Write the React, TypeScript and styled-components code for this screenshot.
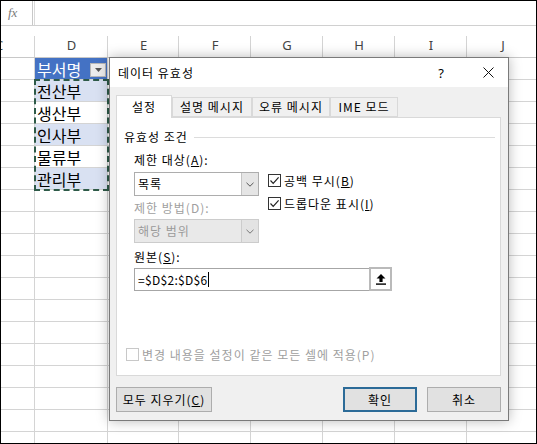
import React from 'react';
import styled, { createGlobalStyle } from 'styled-components';

const Global = createGlobalStyle`
  html, body { margin: 0; padding: 0; background: #fff; }
  body { font-family: "Noto Sans CJK KR", "Noto Sans", sans-serif; }
  * { box-sizing: border-box; }
`;

const KR = `"Noto Sans CJK KR", "Noto Sans", sans-serif`;

const Frame = styled.div`
  position: relative;
  width: 537px;
  height: 444px;
  border: 1px solid #000;
  overflow: hidden;
  background: #fff;
`;

const FormulaBar = styled.div`
  display: flex;
  height: 25px;
  border-bottom: 1px solid #d0d0d0;
`;

const FxBox = styled.div`
  width: 32px;
  display: flex;
  align-items: center;
  padding-left: 7px;
  font-family: "Liberation Serif", serif;
  font-style: italic;
  font-size: 13px;
  color: #7a7a7a;
  border-right: 1px solid #c8c8c8;
`;

const FormulaInput = styled.div`
  flex: 1;
  margin-left: 1px;
  border-left: 1px solid #dadada;
`;

const HeaderRow = styled.div`
  display: flex;
  height: 32px;
  margin-left: -38px;
  border-bottom: 1px solid #c8c8c8;
`;

const HeaderCell = styled.div<{ $w: number }>`
  position: relative;
  flex: 0 0 ${p => p.$w}px;
  display: flex;
  align-items: center;
  justify-content: center;
  padding-top: 6px;
  font-family: "Noto Sans", sans-serif;
  font-size: 13px;
  color: #444;
  &::after {
    content: '';
    position: absolute;
    right: 0;
    top: 10px;
    bottom: 0;
    width: 1px;
    background: #d4d4d4;
  }
`;

const Sheet = styled.div`
  position: relative;
`;

const Row = styled.div`
  display: flex;
  height: 22px;
  margin-left: -38px;
`;

const Cell = styled.div<{ $w: number; $bg?: string; $head?: boolean }>`
  flex: 0 0 ${p => p.$w}px;
  display: flex;
  align-items: center;
  padding-left: 2px;
  border-right: 1px solid #d4d4d4;
  border-bottom: 1px solid #d4d4d4;
  background: ${p => p.$bg || '#fff'};
  font-family: ${KR};
  font-size: 16px;
  line-height: 1;
  color: ${p => (p.$head ? '#fff' : '#000')};
`;

const FilterButton = styled.div`
  margin-left: auto;
  margin-right: 1px;
  margin-top: 3px;
  width: 16px;
  height: 14px;
  background: #ececec;
  border: 1px solid #b8b8b8;
  display: flex;
  align-items: center;
  justify-content: center;
`;

const Ants = styled.div`
  position: absolute;
  left: 33px;
  top: 21px;
  width: 75px;
  height: 112px;
  border: 2px dashed #2e5a48;
  pointer-events: none;
`;

const Dialog = styled.div`
  position: absolute;
  left: 108px;
  top: 56px;
  width: 400px;
  height: 364px;
  border: 1px solid #7a7a7a;
  background: #f0f0f0;
  box-shadow: 0 0 12px rgba(0, 0, 0, 0.28);
  display: flex;
  flex-direction: column;
  font-family: ${KR};
  font-size: 12px;
  letter-spacing: 1px;
  color: #000;
`;

const TitleBar = styled.div`
  height: 29px;
  background: #fff;
  display: flex;
  align-items: center;
  padding-left: 8px;
`;

const TitleText = styled.div`
  flex: 1;
  line-height: 16px;
`;

const TitleButton = styled.div<{ $w: number }>`
  width: ${p => p.$w}px;
  height: 29px;
  display: flex;
  align-items: center;
  justify-content: center;
  font-family: "Noto Sans", sans-serif;
  font-size: 13px;
  letter-spacing: 0;
`;

const Body = styled.div`
  flex: 1;
  display: flex;
  flex-direction: column;
  padding: 8px 7px 0 6px;
`;

const TabRow = styled.div`
  display: flex;
  align-items: flex-end;
  height: 22px;
`;

const Tab = styled.div<{ $w: number; $active?: boolean }>`
  position: relative;
  z-index: ${p => (p.$active ? 2 : 1)};
  width: ${p => p.$w}px;
  height: ${p => (p.$active ? 23 : 20)}px;
  margin-bottom: ${p => (p.$active ? -1 : 0)}px;
  background: ${p => (p.$active ? '#fff' : '#f0f0f0')};
  border: 1px solid #d9d9d9;
  border-bottom: ${p => (p.$active ? 'none' : '1px solid #d9d9d9')};
  display: flex;
  align-items: center;
  justify-content: center;
  padding-bottom: ${p => (p.$active ? 1 : 0)}px;
  line-height: 16px;
  white-space: nowrap;
`;

const Panel = styled.div`
  height: 259px;
  background: #fff;
  border: 1px solid #d9d9d9;
  display: flex;
  flex-direction: column;
  line-height: 16px;
`;

const GroupHeader = styled.div`
  display: flex;
  align-items: center;
  margin: 11px 5px 0 7px;
`;

const GroupLine = styled.div`
  flex: 1;
  height: 1px;
  margin-left: 6px;
  background: #dcdcdc;
`;

const FieldArea = styled.div`
  display: flex;
  padding-left: 17px;
`;

const LeftCol = styled.div`
  width: 258px;
  display: flex;
  flex-direction: column;
`;

const Label = styled.div<{ $top: number; $disabled?: boolean }>`
  margin-top: ${p => p.$top}px;
  color: ${p => (p.$disabled ? '#a0a0a0' : '#000')};
  height: 16px;
`;

const Combo = styled.div<{ $disabled?: boolean }>`
  margin-top: ${p => (p.$disabled ? 3 : 4)}px;
  width: 125px;
  height: 24px;
  display: flex;
  border: 1px solid ${p => (p.$disabled ? '#cccccc' : '#adadad')};
  background: ${p => (p.$disabled ? '#e9e9e9' : '#fff')};
  color: ${p => (p.$disabled ? '#9a9a9a' : '#000')};
`;

const ComboText = styled.div`
  flex: 1;
  display: flex;
  align-items: center;
  padding-left: 3px;
`;

const ComboArrow = styled.div<{ $disabled?: boolean }>`
  width: 17px;
  display: flex;
  align-items: center;
  justify-content: center;
  background: ${p => (p.$disabled ? '#e3e3e3' : '#e5e5e5')};
  border-left: 1px solid ${p => (p.$disabled ? '#cccccc' : '#c4c4c4')};
`;

const SourceInput = styled.div`
  margin-top: 3px;
  width: 258px;
  height: 23px;
  display: flex;
  border: 1px solid #a6a6a6;
  background: #fff;
`;

const SourceText = styled.div`
  flex: 1;
  display: flex;
  align-items: center;
  padding-left: 3px;
  letter-spacing: 0.3px;
`;

const Caret = styled.span`
  display: inline-block;
  width: 1px;
  height: 15px;
  margin-left: 1px;
  background: #000;
`;

const RefButton = styled.div`
  width: 23px;
  margin: -2px -1px -1px 0;
  border: 2px solid #bababa;
  background: #fff;
  display: flex;
  align-items: center;
  justify-content: center;
`;

const CheckCol = styled.div`
  margin-left: -124px;
  margin-top: 29px;
  display: flex;
  flex-direction: column;
  gap: 10px;
`;

const CheckRow = styled.div<{ $disabled?: boolean }>`
  display: flex;
  align-items: center;
  height: 13px;
  white-space: nowrap;
  color: ${p => (p.$disabled ? '#a0a0a0' : '#000')};
`;

const Box = styled.span<{ $disabled?: boolean }>`
  width: 13px;
  height: 13px;
  flex: 0 0 13px;
  border: 1px solid ${p => (p.$disabled ? '#c8c8c8' : '#333')};
  background: #fff;
  margin-right: 3px;
  display: flex;
  align-items: center;
  justify-content: center;
`;

const BottomCheck = styled(CheckRow)`
  margin: auto 0 14px 9px;
`;

const Footer = styled.div`
  display: flex;
  margin-top: 11px;
`;

const Button = styled.div<{ $w: number; $default?: boolean; $push?: boolean }>`
  width: ${p => p.$w}px;
  height: 25px;
  margin-left: ${p => (p.$push ? 'auto' : '0')};
  display: flex;
  align-items: center;
  justify-content: center;
  background: #e1e1e1;
  border: ${p => (p.$default ? '2px solid #2c6b98' : '1px solid #adadad')};
  line-height: 16px;
  white-space: nowrap;
`;

const Gap = styled.div`
  width: 10px;
`;

const Check = () => (
  <svg width="11" height="11" viewBox="0 0 11 11">
    <path d="M1.5 5.5 L4.2 8.3 L9.6 2.4" fill="none" stroke="#222" strokeWidth="1.2" />
  </svg>
);

const Chevron = ({ color = '#555' }: { color?: string }) => (
  <svg width="8" height="5" viewBox="0 0 8 5">
    <path d="M0.5 0.8 L4 4.2 L7.5 0.8" fill="none" stroke={color} strokeWidth="1" />
  </svg>
);

const UpArrow = () => (
  <svg width="10" height="11" viewBox="0 0 10 11">
    <path d="M5 0 L9.5 4.6 L6.6 4.6 L6.6 8 L3.4 8 L3.4 4.6 L0.5 4.6 Z" fill="#000" />
    <rect x="0" y="9.4" width="10" height="1.4" fill="#000" />
  </svg>
);

const CloseX = () => (
  <svg width="11" height="11" viewBox="0 0 11 11">
    <path d="M0.5 0.5 L10.5 10.5 M10.5 0.5 L0.5 10.5" stroke="#111" strokeWidth="1" />
  </svg>
);

const FilterArrow = () => (
  <svg width="7" height="4" viewBox="0 0 7 4">
    <path d="M0 0 L7 0 L3.5 4 Z" fill="#555" />
  </svg>
);

const cols = [
  { key: 'C', w: 72 },
  { key: 'D', w: 73 },
  { key: 'E', w: 71 },
  { key: 'F', w: 72 },
  { key: 'G', w: 72 },
  { key: 'H', w: 72 },
  { key: 'I', w: 72 },
  { key: 'J', w: 72 },
];

const data = ['전산부', '생산부', '인사부', '물류부', '관리부'];
const ROWS = 18;

export default function App() {
  return (
    <>
      <Global />
      <Frame>
        <FormulaBar>
          <FxBox>fx</FxBox>
          <FormulaInput />
        </FormulaBar>
        <HeaderRow>
          {cols.map(c => (
            <HeaderCell key={c.key} $w={c.w}>{c.key}</HeaderCell>
          ))}
        </HeaderRow>
        <Sheet>
          {Array.from({ length: ROWS }).map((_, r) => (
            <Row key={r}>
              {cols.map(c => {
                if (c.key === 'D' && r === 0) {
                  return (
                    <Cell key={c.key} $w={c.w} $bg="#4472c4" $head>
                      부서명
                      <FilterButton><FilterArrow /></FilterButton>
                    </Cell>
                  );
                }
                if (c.key === 'D' && r >= 1 && r <= 5) {
                  return (
                    <Cell key={c.key} $w={c.w} $bg={r % 2 === 1 ? '#d9e1f2' : '#fff'}>
                      {data[r - 1]}
                    </Cell>
                  );
                }
                return <Cell key={c.key} $w={c.w} />;
              })}
            </Row>
          ))}
          <Ants />
        </Sheet>

        <Dialog>
          <TitleBar>
            <TitleText>데이터 유효성</TitleText>
            <TitleButton $w={30}>?</TitleButton>
            <TitleButton $w={12} />
            <TitleButton $w={40}><CloseX /></TitleButton>
          </TitleBar>
          <Body>
            <TabRow>
              <Tab $w={56} $active>설정</Tab>
              <Tab $w={80}>설명 메시지</Tab>
              <Tab $w={78}>오류 메시지</Tab>
              <Tab $w={68}>IME 모드</Tab>
            </TabRow>
            <Panel>
              <GroupHeader>
                유효성 조건
                <GroupLine />
              </GroupHeader>
              <FieldArea>
                <LeftCol>
                  <Label $top={7}>제한 대상(<u>A</u>):</Label>
                  <Combo>
                    <ComboText>목록</ComboText>
                    <ComboArrow><Chevron /></ComboArrow>
                  </Combo>
                  <Label $top={4} $disabled>제한 방법(D):</Label>
                  <Combo $disabled>
                    <ComboText>해당 범위</ComboText>
                    <ComboArrow $disabled><Chevron color="#777" /></ComboArrow>
                  </Combo>
                  <Label $top={6}>원본(<u>S</u>):</Label>
                  <SourceInput>
                    <SourceText>=$D$2:$D$6<Caret /></SourceText>
                    <RefButton><UpArrow /></RefButton>
                  </SourceInput>
                </LeftCol>
                <CheckCol>
                  <CheckRow>
                    <Box><Check /></Box>
                    공백 무시(<u>B</u>)
                  </CheckRow>
                  <CheckRow>
                    <Box><Check /></Box>
                    드롭다운 표시(<u>I</u>)
                  </CheckRow>
                </CheckCol>
              </FieldArea>
              <BottomCheck $disabled>
                <Box $disabled />
                변경 내용을 설정이 같은 모든 셀에 적용(P)
              </BottomCheck>
            </Panel>
            <Footer>
              <Button $w={96}>모두 지우기(<u>C</u>)</Button>
              <Button $w={74} $default $push>확인</Button>
              <Gap />
              <Button $w={74}>취소</Button>
            </Footer>
          </Body>
        </Dialog>
      </Frame>
    </>
  );
}
